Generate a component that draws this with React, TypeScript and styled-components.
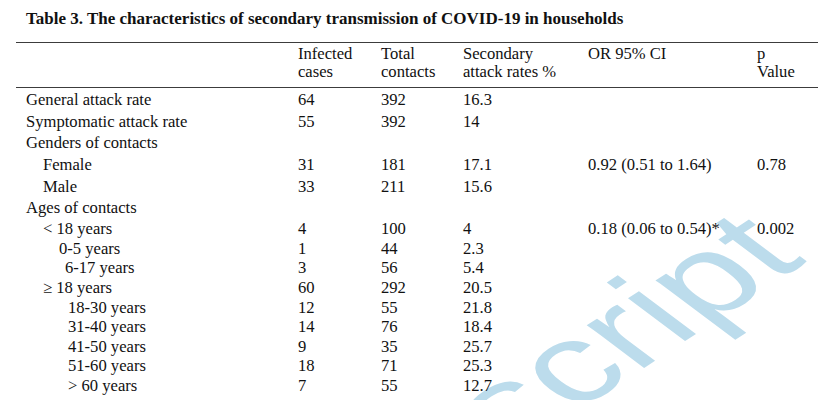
import React, { FunctionComponent } from 'react'
import styled, { createGlobalStyle } from 'styled-components'

type Row = {
  label: string
  indent?: number
  infected?: string
  total?: string
  rate?: string
  or?: string
  p?: string
  tall?: boolean
}

const rows: Row[] = [
  { label: 'General attack rate', infected: '64', total: '392', rate: '16.3', tall: true },
  { label: 'Symptomatic attack rate', infected: '55', total: '392', rate: '14', tall: true },
  { label: 'Genders of contacts', tall: true },
  { label: 'Female', indent: 17, infected: '31', total: '181', rate: '17.1', or: '0.92 (0.51 to 1.64)', p: '0.78', tall: true },
  { label: 'Male', indent: 17, infected: '33', total: '211', rate: '15.6', tall: true },
  { label: 'Ages of contacts', tall: true },
  { label: '< 18 years', indent: 17, infected: '4', total: '100', rate: '4', or: '0.18 (0.06 to 0.54)*', p: '0.002' },
  { label: '0-5 years', indent: 33, infected: '1', total: '44', rate: '2.3' },
  { label: '6-17 years', indent: 39, infected: '3', total: '56', rate: '5.4' },
  { label: '\u2265 18 years', indent: 17, infected: '60', total: '292', rate: '20.5' },
  { label: '18-30 years', indent: 42, infected: '12', total: '55', rate: '21.8' },
  { label: '31-40 years', indent: 42, infected: '14', total: '76', rate: '18.4' },
  { label: '41-50 years', indent: 42, infected: '9', total: '35', rate: '25.7' },
  { label: '51-60 years', indent: 42, infected: '18', total: '71', rate: '25.3' },
  { label: '> 60 years', indent: 42, infected: '7', total: '55', rate: '12.7' },
]

const GlobalStyle = createGlobalStyle`
  body {
    margin: 0;
    background: #fff;
  }
`

const Page = styled.div`
  position: relative;
  width: 825px;
  height: 400px;
  overflow: hidden;
  padding: 0 7px 0 16px;
  box-sizing: border-box;
  font-family: "Liberation Serif", "Times New Roman", serif;
  color: #111;
  background: #fff;
`

const Title = styled.div`
  padding: 9px 0 0 10px;
  height: 42px;
  box-sizing: border-box;
  font-size: 17px;
  font-weight: bold;
  line-height: 20px;
`

const Table = styled.div`
  position: relative;
  z-index: 1;
  border-top: 1.5px solid #3c3c3c;
`

const Line = styled.div<{ $tall?: boolean }>`
  display: grid;
  grid-template-columns: 282px 83px 82px 125px 169px 61px;
  height: ${(p) => (p.$tall ? '21.7px' : '19.6px')};
  font-size: 16.6px;
  line-height: ${(p) => (p.$tall ? '21.7px' : '19.6px')};
  white-space: nowrap;
`

const Head = styled(Line)`
  height: auto;
  line-height: 18px;
  padding: 2px 0 6px;
  border-bottom: 1.5px solid #3c3c3c;
  margin-bottom: 1px;
`

const Label = styled.div<{ $indent?: number }>`
  padding-left: ${(p) => 10 + (p.$indent || 0)}px;
`

const Cell = styled.div``

// watermark stamped across the page, slanted like the scanned original
const Watermark = styled.div`
  position: absolute;
  left: 808px;
  top: 261px;
  width: 0;
  height: 0;
  transform: matrix(0.92, -0.6, 0.8, 0.6, 0, 0);
  transform-origin: 0 0;
  z-index: 0;
`

const WatermarkText = styled.span`
  position: absolute;
  right: 0;
  top: -114px;
  font-family: "Liberation Sans", Arial, sans-serif;
  font-size: 135px;
  line-height: 135px;
  color: #bcdcec;
  white-space: nowrap;
`

export const App: FunctionComponent = () => {
  return (
    <Page>
      <GlobalStyle />
      <Watermark>
        <WatermarkText>script</WatermarkText>
      </Watermark>
      <Title>
        Table 3. The characteristics of secondary transmission of COVID-19 in households
      </Title>
      <Table>
        <Head>
          <Label />
          <Cell>Infected<br />cases</Cell>
          <Cell>Total<br />contacts</Cell>
          <Cell>Secondary<br />attack rates %</Cell>
          <Cell>OR 95% CI</Cell>
          <Cell>p<br />Value</Cell>
        </Head>
        {rows.map((r) => (
          <Line key={r.label} $tall={r.tall}>
            <Label $indent={r.indent}>{r.label}</Label>
            <Cell>{r.infected}</Cell>
            <Cell>{r.total}</Cell>
            <Cell>{r.rate}</Cell>
            <Cell>{r.or}</Cell>
            <Cell>{r.p}</Cell>
          </Line>
        ))}
      </Table>
    </Page>
  )
}

export default App
